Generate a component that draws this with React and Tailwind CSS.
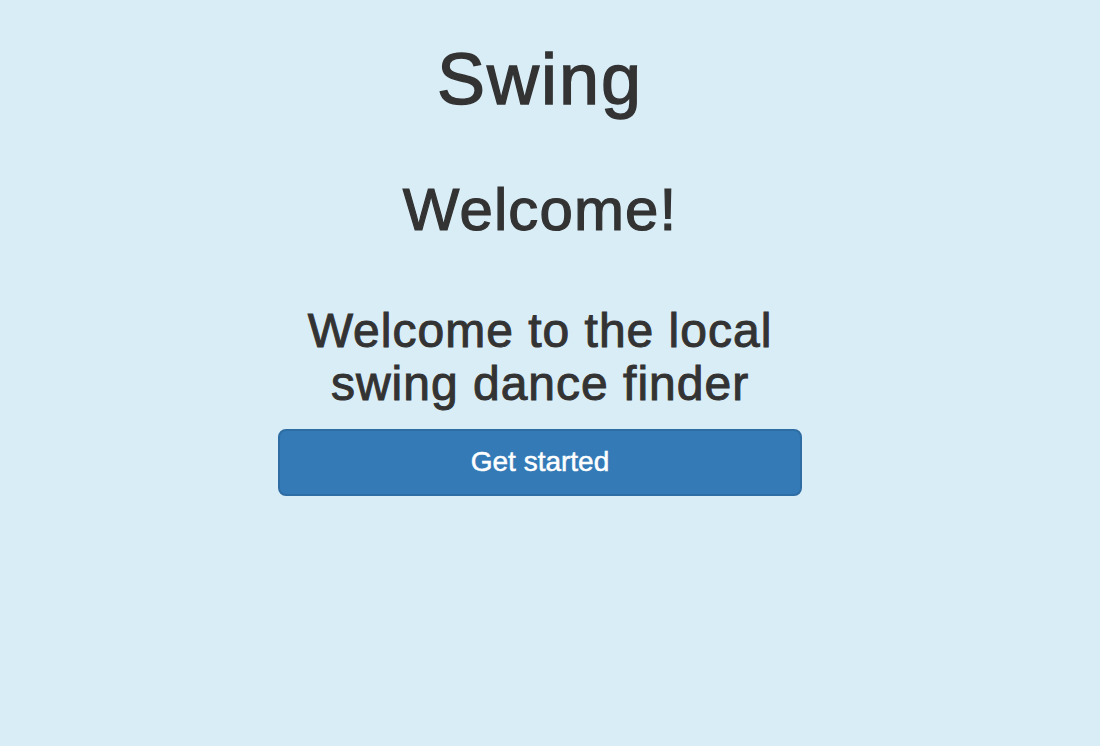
export default function App() {
  return (
    <div
      className="min-h-[746px] w-full bg-[#d9edf7] text-[#333333]"
      style={{ fontFamily: '"Liberation Sans", Arial, Helvetica, sans-serif' }}
    >
      <div className="w-[1080px] pt-[40px] flex flex-col items-center text-center">
        <h1 className="text-[72px] leading-[1.1] font-medium tracking-[2px] [-webkit-text-stroke:1.4px_#333333]">Swing</h1>
        <h2 className="mt-[58px] text-[60px] leading-[1.1] font-medium tracking-[1.1px] [-webkit-text-stroke:1.2px_#333333]">Welcome!</h2>
        <h3 className="mt-[62px] w-[560px] text-[48px] leading-[1.1] font-medium tracking-[1px] [-webkit-text-stroke:1px_#333333]">
          Welcome to the local
          <br />
          swing dance finder
        </h3>
        <button className="mt-[18px] w-[524px] h-[67px] rounded-[8px] border-2 border-[#2e6da4] bg-[#337ab7] text-white text-[28px] leading-[40px] [-webkit-text-stroke:0.5px_#ffffff]">
          Get started
        </button>
      </div>
    </div>
  );
}
